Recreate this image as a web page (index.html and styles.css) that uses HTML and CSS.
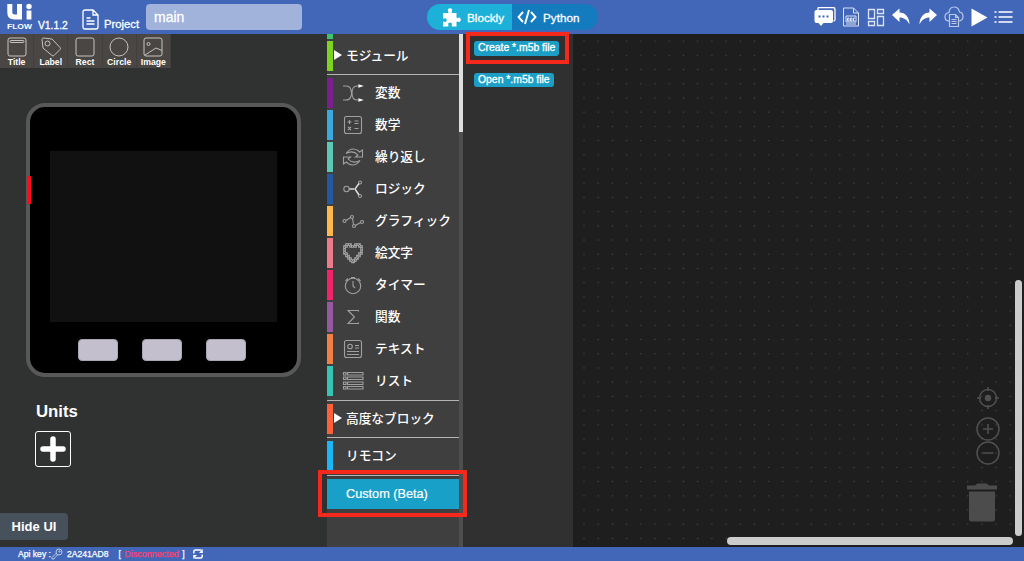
FILE: index.html
```html
<!DOCTYPE html>
<html lang="ja">
<head>
<meta charset="UTF-8">
<meta name="viewport" content="width=device-width, initial-scale=1.0">
<title>UIFlow</title>
<link rel="stylesheet" href="styles.css">
</head>
<body>
    <header class="topbar">
        <svg class="logo" width="27" height="32" viewBox="0 0 27 32">
            <path d="M2.800 4v8.500q0 4.500 4.800 4.500h5M12.500 4v15.500" fill="none" stroke="#fff" stroke-width="5"/>
            <path d="M22 10.500v9" stroke="#fff" stroke-width="4.800"/>
            <circle cx="22" cy="6.500" r="2.700" fill="#fff"/>
            <text x="0" y="29" textLength="25" lengthAdjust="spacingAndGlyphs">FLOW</text>
        </svg>
        <span class="version">V1.1.2</span>
        <svg class="doc" width="18" height="22" viewBox="0 0 18 22" fill="none" stroke="#fff" stroke-width="1.300">
            <path d="M3 1h8l5 5v12q0 2-2 2H3q-2 0-2-2V3q0-2 2-2zM11 1v5h5M4.500 9h4M4.500 12h8M4.500 15h8"/>
        </svg>
        <span class="project">Project</span>
        <input class="name" type="text" value="main">
        <div class="modes">
            <div class="mode blockly">
                <svg width="19" height="19" viewBox="0 0 19 19" fill="#fff"><path d="M1 5h5.200q.7-.8-.1-1.800C5.200 1.500 6.500.2 8 .2s2.800 1.300 2 3q-.8 1 0 1.800h4.500v4.500q.7.800 1.800.2c1.300-.8 2.500.4 2.500 2s-1.200 2.800-2.500 2q-1.100-.6-1.800.2V18.500H10q-.8-.8-.1-1.800c.6-1.200-.5-2.200-1.800-2.200s-2.500 1-1.800 2.200q.6 1-.2 1.800H1v-4.500q.6-.8 1.500-.2c1.300.6 2.200-.4 2.200-1.700s-1-2.300-2.200-1.700Q1.600 11 1 10.300z"/></svg>
                <span>Blockly</span>
            </div>
            <div class="mode python">
                <svg width="20" height="16" viewBox="0 0 20 16" fill="none" stroke="#fff" stroke-width="1.900"><path d="M6 3L1.500 8 6 13M14 3l4.500 5-4.500 5M12 1L8 15"/></svg>
                <span>Python</span>
            </div>
        </div>
        <div class="tools">
            <svg width="22" height="20" viewBox="0 0 22 20"><path d="M4 4V1.500Q4 .5 5 .5h14q2 0 2 2v10q0 1.500-1.500 1.500" fill="none" stroke="#fff" stroke-width="1.300"/><path d="M2.500 3h14.500q2 0 2 2v9q0 2-2 2H9.500l-2.500 3-2.500-3h-2q-2 0-2-2V5q0-2 2-2z" fill="#fff"/><path d="M4.500 9.500h2m2 0h2m2 0h2" stroke="#4267b8" stroke-width="2"/></svg>
            <svg width="18" height="20" viewBox="0 0 18 20" fill="none" stroke="#dbe4f5"><path d="M1.500 1h10l5 5v13h-15zM11.500 1v5h5M4 9h10v6H4z"/><path d="M5.500 11v3h1.500v-3zM8.500 11v3h1.500v-3zM13 11h-1.500v3H13M4 17h10"/></svg>
            <svg width="18" height="19" viewBox="0 0 18 19" fill="none" stroke="#dbe4f5" stroke-width="1.300"><path d="M1.500 1.500h6v9h-6zM10.500 1.500h6v4h-6zM1.500 13.500h6v4h-6zM10.500 8.500h6v9h-6z"/></svg>
            <svg width="20" height="18" viewBox="0 0 20 18" fill="#fff"><path d="M1 7l7.500-6.500v4C14 4.500 18.500 9 18.500 16.500 16 11.500 13 9.500 8.500 9.500V14z"/></svg>
            <svg width="20" height="18" viewBox="0 0 20 18" fill="#fff"><path d="M19 7l-7.500-6.500v4C6 4.500 1.500 9 1.500 16.500 4 11.500 7 9.500 11.500 9.500V14z"/></svg>
            <svg width="20" height="22" viewBox="0 0 20 22" fill="none" stroke="#b9c9ea" stroke-width="1.200"><path d="M5 15Q1 15 1 11t4-4.500Q5.500 1 10 1t5.500 5q3.500.5 3.500 4.500T15 15M5.500 8.500h6l3 3v9h-9zM11.500 8.500v3h3M7.500 13.500h5M7.500 15.500h5M7.500 17.500h5"/></svg>
            <svg width="17" height="19" viewBox="0 0 17 19" fill="#fff"><path d="M.5.500v18L16.500 9.500z"/></svg>
            <svg width="19" height="14" viewBox="0 0 19 14" stroke="#fff" stroke-width="1.500"><path d="M.5 2h2M4.500 2h14M.5 7h2M4.500 7h14M.5 12h2M4.500 12h14"/></svg>
        </div>
    </header>

    <main class="main">
        <section class="designer">
            <div class="widgets">
                <div class="widget"><svg viewBox="0 0 20 20"><rect x="1" y="1" width="18" height="18" rx="2"/><rect x="3" y="3.500" width="14" height="2" rx="1"/></svg>Title</div>
                <div class="widget"><svg viewBox="0 0 20 20"><path d="M1 2.500Q1 1 2.500 1L11 2l8 8.500q1 1 0 2L13 18.500q-1 1-2 0L2 11z"/><circle cx="6.500" cy="6.500" r="2.500"/></svg>Label</div>
                <div class="widget"><svg viewBox="0 0 20 20"><rect x="1" y="1" width="18" height="18" rx="2"/></svg>Rect</div>
                <div class="widget"><svg viewBox="0 0 20 20"><circle cx="10" cy="10" r="9"/></svg>Circle</div>
                <div class="widget"><svg viewBox="0 0 20 20"><rect x="1" y="1" width="18" height="18" rx="2"/><circle cx="5.500" cy="7" r="1.500"/><path d="M2 18L13 11l6 2.500"/></svg>Image</div>
            </div>
            <div class="device">
                <div class="power"></div>
                <div class="screen"></div>
                <div class="buttons"><i></i><i></i><i></i></div>
            </div>
            <h2 class="units">Units</h2>
            <button class="add"><svg width="28" height="28" viewBox="0 0 28 28" stroke="#fff" stroke-width="5.500" stroke-linecap="round"><path d="M14 4v20M4 14h20"/></svg></button>
            <button class="hide">Hide UI</button>
        </section>

        <nav class="toolbox">
            <div class="list">
                <div class="stub"></div>
                <div class="row lime"><b class="arrow"></b><span>モジュール</span></div>
                <hr>
                <div class="row purple"><svg viewBox="0 0 22 22"><path d="M1 4h3q4 0 5 4t0 6q-1 4-5 4H1M19 4h-4q-5 0-5 7t5 7h4"/><path d="M17 3l3 1-3 1zM17 17l3 1-3 1z" fill="#fff" stroke="#fff"/></svg><span>変数</span></div>
                <div class="row blue"><svg viewBox="0 0 22 22"><rect x="2.500" y="2.500" width="17" height="17" rx="2"/><path d="M5.500 8h4M7.500 6v4M12.500 7h4M12.500 9.500h4M6 13l3 3M9 13l-3 3M12.500 14.500h4"/></svg><span>数学</span></div>
                <div class="row mint"><svg viewBox="0 0 22 22"><path d="M4 7.500Q9 .5 16 4.500l1.500 1.500L20.500 4v7H13.500l2.500-2Q11 3.500 4 7.500zM18 14.500Q13 21.500 6 17.500L4.500 16 1.500 18v-7H8.500l-2.500 2Q11 18.500 18 14.500z"/></svg><span>繰り返し</span></div>
                <div class="row navy"><svg viewBox="0 0 22 22"><circle cx="4.500" cy="11" r="2.700"/><circle cx="18" cy="4.500" r="1.500"/><circle cx="18" cy="18" r="1.500"/><path d="M7.500 11H12M17 5.500L13 11l4 6" stroke="#ddd" stroke-width="1.500"/></svg><span>ロジック</span></div>
                <div class="row yellow"><svg viewBox="0 0 22 22"><circle cx="2.500" cy="11" r="1.500"/><circle cx="10" cy="7" r="1.500"/><circle cx="12" cy="16" r="1.500"/><circle cx="20" cy="12" r="1.500"/><path d="M4 10.500l4.500-3M10.500 8.500l1 6M13.500 15.500l5-3"/></svg><span>グラフィック</span></div>
                <div class="row pink"><svg viewBox="0 0 22 22"><path d="M4.500 2.500h4v2h5v-2h4v2h2v7h-2v2.500h-2V16.500h-2V18.500h-2v1.500h-1v-1.500h-2v-2h-2V14h-2v-2.500h-2v-7h2z" stroke-width="2.600" stroke="#a8a8a8"/><path d="M4.500 2.500h4v2h5v-2h4v2h2v7h-2v2.500h-2V16.500h-2V18.500h-2v1.500h-1v-1.500h-2v-2h-2V14h-2v-2.500h-2v-7h2z" stroke="#555" stroke-width=".9" stroke-dasharray="1.200 1.300"/></svg><span>絵文字</span></div>
                <div class="row rose"><svg viewBox="0 0 22 22"><circle cx="11" cy="12" r="7.700"/><path d="M11 7v5l2 2M9 3.500h4M16 4.500l2.500 2.500M6 4.500L3.500 7"/></svg><span>タイマー</span></div>
                <div class="row violet"><svg viewBox="0 0 22 22"><path d="M16.500 5.500V4.500H6l6.500 6.500L6 17.500h10.500v-1"/></svg><span>関数</span></div>
                <div class="row orange"><svg viewBox="0 0 22 22"><rect x="2.500" y="2.500" width="17" height="17" rx="2"/><circle cx="8" cy="8.500" r="2.300"/><path d="M13 7.500h4M13 10h4M5 13.500h12M5 16.500h12"/></svg><span>テキスト</span></div>
                <div class="row teal"><svg viewBox="0 0 22 22"><path d="M1.500 2.500h2.500v2.500H1.500zM5.500 2.500h15.500v2.500H5.500zM1.500 7h2.500v2.500H1.500zM5.500 7h15.500v2.500H5.500zM1.500 12h2.500v2.500H1.500zM5.500 12h15.500v2.500H5.500zM1.500 16.500h2.500v2.500H1.500zM5.500 16.500h15.500v2.500H5.500z"/></svg><span>リスト</span></div>
                <hr>
                <div class="row coral"><b class="arrow"></b><span>高度なブロック</span></div>
                <hr>
                <div class="row sky"><span class="plain">リモコン</span></div>
                <hr>
                <div class="row custom"><span class="plain">Custom (Beta)</span></div>
            </div>
            <div class="scroll"><div class="thumb"></div></div>
            <div class="mark mark-custom"></div>
        </nav>

        <aside class="flyout">
            <button class="file">Create *.m5b file</button>
            <button class="file">Open *.m5b file</button>
            <div class="mark mark-create"></div>
        </aside>

        <section class="workspace">
            <svg class="grid" width="451" height="513">
                <pattern id="dots" x="3.900" y="0" width="14.210" height="14.210" patternUnits="userSpaceOnUse">
                    <rect x="6.500" y="6.500" width="1.200" height="1.200" fill="#484848"/>
                </pattern>
                <rect width="451" height="513" fill="url(#dots)"/>
            </svg>
            <div class="controls">
                <svg width="24" height="24" viewBox="0 0 24 24"><circle cx="12" cy="12" r="8.500"/><circle cx="12" cy="12" r="2.500" fill="#505050"/><path d="M12 1v4M12 19v4M1 12h4M19 12h4"/></svg>
                <svg class="plus" width="24" height="24" viewBox="0 0 24 24"><circle cx="12" cy="12" r="11"/><path d="M7 12h10M12 7v10"/></svg>
                <svg width="24" height="24" viewBox="0 0 24 24"><circle cx="12" cy="12" r="11"/><path d="M6.500 12h11"/></svg>
            </div>
            <svg class="trash" width="30" height="39" viewBox="0 0 30 39" fill="#4c4c4c"><path d="M0 2.500h8L10.500.5h9l2.500 2h8v4H0zM2 8.500h26V36q0 2.500-2.500 2.500h-21Q2 38.500 2 36z"/></svg>
            <div class="vbar"></div>
            <div class="hbar"></div>
        </section>
    </main>

    <footer class="status">
        <span>Api key :</span>
        <svg class="key" width="12" height="12" viewBox="0 0 12 12" fill="none" stroke="#b9c9ea"><circle cx="8" cy="4" r="3"/><circle cx="8.500" cy="3.500" r=".7"/><path d="M5.500 5L1 9.500V11h2l1-1.500 3-3"/></svg>
        <span class="code">2A241AD8</span>
        <span class="state">[ <em>Disconnected</em> ]</span>
        <svg width="12" height="12" viewBox="0 0 12 12" fill="none" stroke="#fff" stroke-width="1.500"><path d="M1.800 5.500V3.500Q1.800 2 3.500 2H9.500M10.200 6.500v2Q10.200 10 8.500 10H2.500"/><path d="M10.800 1v4H7zM1.200 11V7H5z" fill="#fff" stroke="none"/></svg>
    </footer>
</body>
</html>
```
FILE: styles.css
```css
* {
    box-sizing: border-box;
}
body {
    margin: 0;
    height: 561px;
    display: flex;
    flex-direction: column;
    overflow: hidden;
    background-color: #1e1e1e;
    color: white;
    font-family: "Liberation Sans", "Noto Sans CJK JP", sans-serif;
}
svg {
    flex: none;
    display: block;
}
button {
    border: 0;
    padding: 0;
    color: white;
    font-family: inherit;
}

/* top bar */
.topbar {
    height: 34px;
    flex: none;
    display: flex;
    background-color: #4267b8;
    padding-left: 7px;
}
.logo text {
    font-size: 7px;
    font-weight: bold;
    fill: white;
}
.version {
    margin: 20px 0 0 4px;
    width: 30px;
    font-size: 10.3px;
    line-height: 12px;
    -webkit-text-stroke: 0.3px white;
}
.doc {
    margin: 9px 0 0 14px;
}
.project {
    margin: 17px 0 0 4px;
    width: 36px;
    font-size: 11.3px;
    line-height: 14px;
    -webkit-text-stroke: 0.3px white;
}
.name {
    margin: 4px 0 0 6px;
    width: 156px;
    height: 26px;
    padding: 0 8px;
    border: 0;
    border-radius: 4px;
    background-color: #a1b3db;
    color: white;
    font-family: inherit;
    font-size: 14px;
    -webkit-text-stroke: 0.3px white;
}
.modes {
    display: flex;
    margin: 4px 0 0 125px;
    width: 171px;
    height: 26px;
    border-radius: 13px;
    overflow: hidden;
    font-size: 11.7px;
    -webkit-text-stroke: 0.3px white;
}
.mode {
    display: flex;
    align-items: center;
}
.blockly {
    width: 85px;
    padding-left: 15px;
    gap: 6px;
    background-color: #1db1d9;
}
.python {
    width: 86px;
    padding-left: 5px;
    gap: 6px;
    background-color: #147bbf;
}
.tools {
    display: flex;
    align-items: center;
    justify-content: space-between;
    margin-left: 216px;
    width: 199px;
}

.main {
    flex: 1;
    display: flex;
    min-height: 0;
}

/* left panel */
.designer {
    width: 327px;
    background-color: #303232;
    display: flex;
    flex-direction: column;
    align-items: flex-start;
}
.widgets {
    display: flex;
    height: 34px;
}
.widget {
    width: 34.2px;
    background-color: #4a4644;
    border-right: 1px solid #433f3e;
    display: flex;
    flex-direction: column;
    align-items: center;
    font-size: 8.7px;
    font-weight: bold;
    line-height: 10px;
    padding-top: 3px;
}
.widget svg {
    width: 20px;
    height: 20px;
    fill: none;
    stroke: #c5c3c2;
    stroke-width: 1;
}
.device {
    position: relative;
    margin: 35px 0 0 26px;
    width: 275px;
    height: 274px;
    border: 4px solid #585858;
    border-radius: 19px;
    background-color: black;
    padding: 44px 20px 0;
}
.power {
    position: absolute;
    left: -3px;
    top: 69px;
    width: 4px;
    height: 28px;
    border-radius: 1px;
    background-color: #ff0a1e;
}
.screen {
    width: 227px;
    height: 171px;
    background-color: #111;
}
.buttons {
    display: flex;
    gap: 24px;
    padding: 17px 0 0 28px;
}
.buttons i {
    width: 40px;
    height: 22px;
    border: 1px solid #a9a5b2;
    border-radius: 4px;
    background-color: #c3bfcc;
}
.units {
    margin: 25px 0 0 36px;
    font-size: 16.8px;
    line-height: 20px;
}
.add {
    margin: 9px 0 0 35px;
    width: 36px;
    height: 36px;
    display: flex;
    align-items: center;
    justify-content: center;
    border: 1.5px solid white;
    border-radius: 3px;
    background: none;
}
.hide {
    margin-top: 46px;
    width: 68px;
    height: 27px;
    border-radius: 0 4px 4px 0;
    background-color: #46515b;
    font-size: 13px;
    font-weight: bold;
}

/* block categories */
.toolbox {
    position: relative;
    width: 136px;
    display: flex;
    background-color: #3f3f3f;
}
.list {
    width: 132px;
    display: flex;
    flex-direction: column;
}
.stub {
    height: 5px;
    width: 6px;
    margin-bottom: 2px;
    background-color: #3cc46c;
}
.row {
    display: flex;
    align-items: center;
    flex: none;
    height: 30px;
    margin-bottom: 2px;
    padding-bottom: 3px;
    border-left: 6px solid;
    font-size: 12.7px;
    font-weight: 500;
    white-space: nowrap;
}
.row span {
    color: white;
}
.row svg {
    width: 22px;
    height: 22px;
    margin: 2px 11px 0 9px;
    fill: none;
    stroke: #a0a0a0;
    stroke-width: 1.1;
}
.row .plain {
    margin-left: 13px;
}
.arrow {
    margin: 1px 4px 0 1px;
    border-left: 8px solid white;
    border-top: 5px solid transparent;
    border-bottom: 5px solid transparent;
}
.list hr {
    width: 133px;
    height: 1px;
    flex: none;
    margin: 1.3px 0 3.2px;
    border: 0;
    background-color: #b4b4b4;
}
.lime { border-color: #7ed321; }
.purple { border-color: #7b1f8f; }
.blue { border-color: #3ba9dd; }
.mint { border-color: #5ec8b5; }
.navy { border-color: #24589f; }
.yellow { border-color: #ffb84d; }
.pink { border-color: #ec7b8b; }
.rose { border-color: #f0246a; }
.violet { border-color: #9559a0; }
.orange { border-color: #f27f45; }
.teal { border-color: #37c4b4; }
.coral { border-color: #ff6138; }
.sky { border-color: #1cb5f5; }
.custom {
    width: 133px;
    padding-bottom: 0;
    border-color: #19a0c8;
    background-color: #19a0c8;
    -webkit-text-stroke: 0.2px white;
}
.scroll {
    width: 4px;
    background-color: #4e4e4e;
}
.thumb {
    height: 98px;
    background-color: #dedede;
}

/* highlight frames */
.mark {
    position: absolute;
    border: 4px solid #f5291b;
    z-index: 2;
}
.mark-custom {
    left: -9px;
    top: 436px;
    width: 149px;
    height: 47px;
}
.mark-create {
    left: 3px;
    top: -2px;
    width: 103px;
    height: 32px;
}

.flyout {
    position: relative;
    width: 110px;
    display: flex;
    flex-direction: column;
    align-items: flex-start;
    gap: 17px;
    padding: 7px 0 0 11px;
    background-color: #303030;
}
.file {
    height: 14.5px;
    padding: 0 4px;
    border-radius: 3px;
    background-color: #1b9fc6;
    font-size: 10.4px;
    line-height: 14px;
    white-space: nowrap;
    -webkit-text-stroke: 0.3px white;
}

/* workspace */
.workspace {
    position: relative;
    flex: 1;
    background-color: #1e1e1e;
}
.controls {
    position: absolute;
    left: 403px;
    top: 352px;
    display: flex;
    flex-direction: column;
    fill: none;
    stroke: #505050;
    stroke-width: 1.5;
}
.plus {
    margin-top: 7px;
}
.trash {
    position: absolute;
    left: 394px;
    top: 449px;
}
.vbar,
.hbar {
    position: absolute;
    border-radius: 4px;
    background-color: #ccc;
}
.vbar {
    left: 442px;
    top: 246px;
    width: 7px;
    height: 256px;
}
.hbar {
    left: 154px;
    top: 503px;
    width: 286px;
    height: 8px;
}

/* bottom bar */
.status {
    height: 14px;
    flex: none;
    display: flex;
    align-items: center;
    padding-left: 18px;
    background-color: #4267b8;
    font-size: 8.6px;
    white-space: nowrap;
    -webkit-text-stroke: 0.25px;
}
.code {
    margin-left: 4px;
}
.state {
    margin: 0 7px 0 10px;
    word-spacing: 1px;
}
.state em {
    font-style: normal;
    font-size: 9px;
    color: #ff3f6c;
}
```
